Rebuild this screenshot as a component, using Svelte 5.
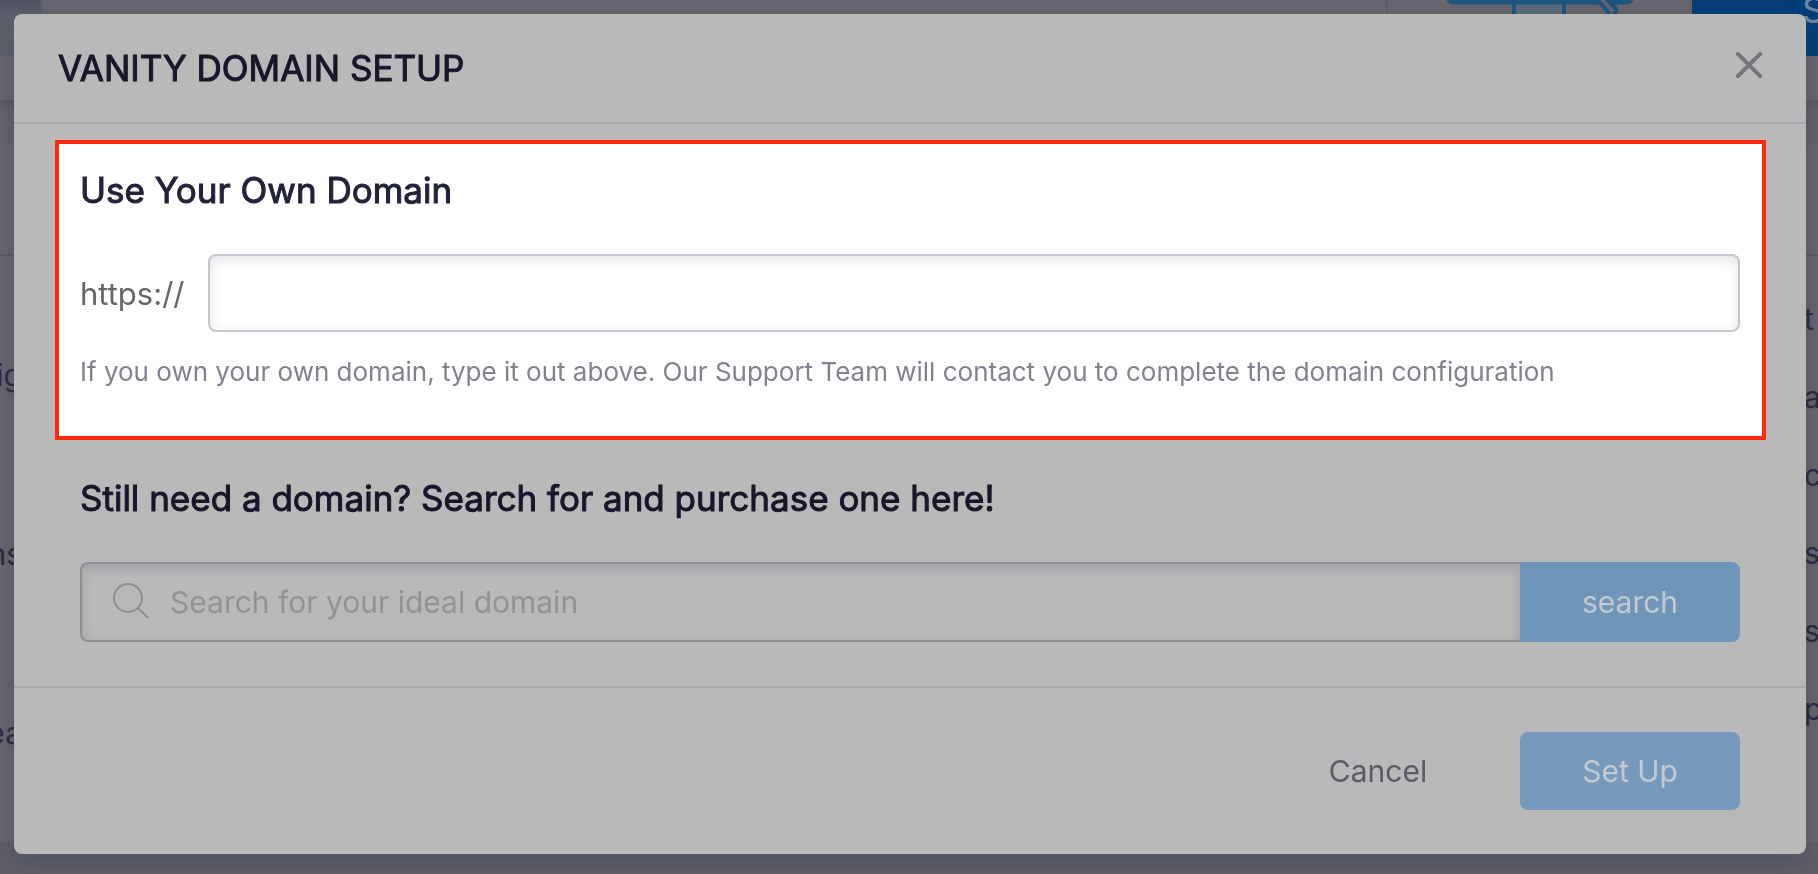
<script lang="ts">
  const navLabels = ["ig", "ns", "ea"];
  const rowLabels = ["t", "a", "c", "s", "s", "p"];

  let ownDomain = $state("");
  let query = $state("");
</script>

<div class="page" aria-hidden="true">
  <div class="topbar">
    <div class="brand"></div>
    <div class="tool">
      <svg width="190" height="20" viewBox="0 0 190 20" fill="none">
        <path d="M71 4H118V20H71Z" fill="#5a6b7c" />
        <path d="M3 -6Q3 2 10 2H180Q187 2 187 -6" stroke="#1d557f" stroke-width="5" />
        <path d="M69 2V20M119 2V20" stroke="#1d557f" stroke-width="4" />
        <path d="M147 -6L165 14L172 11L157 -6Z" fill="#68666f" />
        <path d="M147 -6L165 14M157 -6L171 9Q172 12 168 14" stroke="#1d557f" stroke-width="4" />
      </svg>
    </div>
    <div class="action">S</div>
  </div>
  <div class="subbar"></div>
  <div class="strip"></div>
  <div class="head"></div>
  <div class="content">
    <div class="nav">
      {#each navLabels as label}
        <span>{label}</span>
      {/each}
    </div>
    <div class="rows">
      {#each rowLabels as label}
        <span>{label}</span>
      {/each}
    </div>
  </div>
  <div class="bottom"></div>
</div>

<div class="backdrop">
  <div class="modal" role="dialog" aria-modal="true" aria-labelledby="title">
    <header>
      <h1 id="title">VANITY DOMAIN SETUP</h1>
      <button class="close" type="button" aria-label="Close">
        <svg width="28" height="28" viewBox="0 0 28 28">
          <path d="M4 3L26 25M26 3L4 25" stroke="#74737e" stroke-width="4" stroke-linecap="round" />
        </svg>
      </button>
    </header>

    <main>
      <section class="own">
        <h2>Use Your Own Domain</h2>
        <div class="field">
          <label for="own-domain">https://</label>
          <input id="own-domain" type="text" bind:value={ownDomain} />
        </div>
        <p>
          If you own your own domain, type it out above. Our Support Team will contact you to complete the domain configuration
        </p>
      </section>

      <section class="find">
        <h2>Still need a domain? Search for and purchase one here!</h2>
        <form class="search">
          <label class="box">
            <svg width="36" height="36" viewBox="0 0 36 36" fill="none" stroke="#8d8d94" stroke-width="2">
              <circle cx="16" cy="14" r="14" />
              <path d="M26 24L36 34" />
            </svg>
            <input type="text" placeholder="Search for your ideal domain" aria-label="Search for your ideal domain" bind:value={query} />
          </label>
          <button class="primary" type="button">search</button>
        </form>
      </section>
    </main>

    <footer>
      <button class="cancel" type="button">Cancel</button>
      <button class="primary setup" type="button">Set Up</button>
    </footer>
  </div>
</div>

<style>
  :global(body) {
    margin: 0;
    background: #676570;
    font-family: Inter, "Liberation Sans", sans-serif;
  }
  h1,
  h2,
  p {
    margin: 0;
  }
  button,
  input {
    font: inherit;
    box-sizing: border-box;
  }
  button {
    border: none;
    padding: 0;
    background: none;
    cursor: pointer;
  }

  .page {
    height: 100vh;
    display: flex;
    flex-direction: column;
    overflow: hidden;
    font-size: 30px;
    color: #2b2a3c;
  }
  .topbar {
    display: flex;
    height: 56px;
    background: #68666f;
  }
  .brand {
    width: 40px;
    border-right: 2px solid #5d5c69;
    background: linear-gradient(#50505f, #5c626d 14px);
  }
  .tool {
    width: 304px;
    margin-left: auto;
    border-left: 2px solid #605f6a;
    display: flex;
    justify-content: center;
  }
  .tool svg {
    flex: none;
  }
  .action {
    box-sizing: border-box;
    width: 126px;
    padding-left: 110px;
    background: #053f77;
    color: #6e87a5;
    font-size: 36px;
    line-height: 20px;
  }
  .subbar {
    height: 44px;
    background: #68666f;
  }
  .strip {
    height: 46px;
    background: linear-gradient(#5b5a66, #64636e 12px);
  }
  .head {
    height: 108px;
    border-bottom: 2px solid #5c5b68;
  }
  .content {
    flex: 1;
    min-height: 0;
    display: flex;
    justify-content: space-between;
  }
  .bottom {
    height: 31px;
    background: #605f6b;
  }
  .nav,
  .rows {
    display: flex;
    flex-direction: column;
  }
  .nav {
    width: 22px;
    padding-top: 30px;
  }
  .nav span {
    display: flex;
    justify-content: flex-end;
    line-height: 179px;
  }
  .rows {
    width: 14px;
    padding-top: 24px;
  }
  .rows span {
    line-height: 78px;
  }

  .backdrop {
    position: fixed;
    inset: 0;
    padding: 14px 12px 20px 14px;
  }
  .modal {
    border-radius: 8px;
    background: #b9b9b9;
    box-shadow: 0 8px 24px rgba(40, 50, 70, 0.3);
    color: #17172a;
  }
  header {
    display: flex;
    justify-content: space-between;
    height: 76px;
    padding: 32px 44px 0;
    border-bottom: 2px solid #a9a9ad;
  }
  /* regular weight thickened a little, narrower than the real semibold */
  h1,
  h2 {
    font-size: 35px;
    line-height: 44px;
    font-weight: 400;
    -webkit-text-stroke: 1px currentColor;
  }
  .close {
    display: flex;
    align-items: center;
    height: 38px;
  }
  main {
    padding: 16px 40px 44px 41px;
  }
  .own {
    padding: 24px 22px 48px 21px;
    border: 4px solid #fd2b0b;
    background: #fff;
    color: #22223a;
  }
  .field {
    display: flex;
    align-items: center;
    gap: 22px;
    margin-top: 42px;
    font-size: 30px;
    color: #666;
  }
  .field label {
    width: 106px;
    font-size: 31px;
  }
  .field input {
    flex: 1;
    min-width: 0;
    height: 78px;
    padding: 0 24px;
    border: 2px solid #c6c6d0;
    border-radius: 8px;
    box-shadow: inset 0 4px 12px rgba(30, 30, 60, 0.12);
  }
  .own p {
    margin-top: 24px;
    font-size: 26px;
    line-height: 32px;
    color: #82828f;
  }
  .find {
    padding: 36px 26px 0 25px;
  }
  .search {
    display: flex;
    margin-top: 42px;
  }
  .box {
    flex: 1;
    display: flex;
    align-items: center;
    gap: 22px;
    height: 76px;
    padding-left: 30px;
    border: 2px solid #8e8e94;
    border-right: none;
    border-radius: 8px 0 0 8px;
    box-shadow: inset 0 4px 12px rgba(30, 30, 60, 0.15);
  }
  .box svg {
    overflow: visible;
  }
  .box input {
    flex: 1;
    min-width: 0;
    padding: 0;
    border: none;
    background: none;
    outline: none;
    font-size: 30px;
  }
  .box input::placeholder {
    color: #929297;
    opacity: 1;
  }
  .primary {
    width: 220px;
    border-radius: 0 8px 8px 0;
    background: #6f96b9;
    color: #c3c9d0;
    font-size: 30px;
  }
  footer {
    display: flex;
    justify-content: flex-end;
    padding: 44px 66px;
    border-top: 2px solid #a9a9ad;
  }
  .cancel {
    width: 220px;
    margin-right: 32px;
    font-size: 30px;
    color: #5b5b68;
  }
  .setup {
    height: 78px;
    border-radius: 8px;
    background: #7799bc;
  }
</style>
